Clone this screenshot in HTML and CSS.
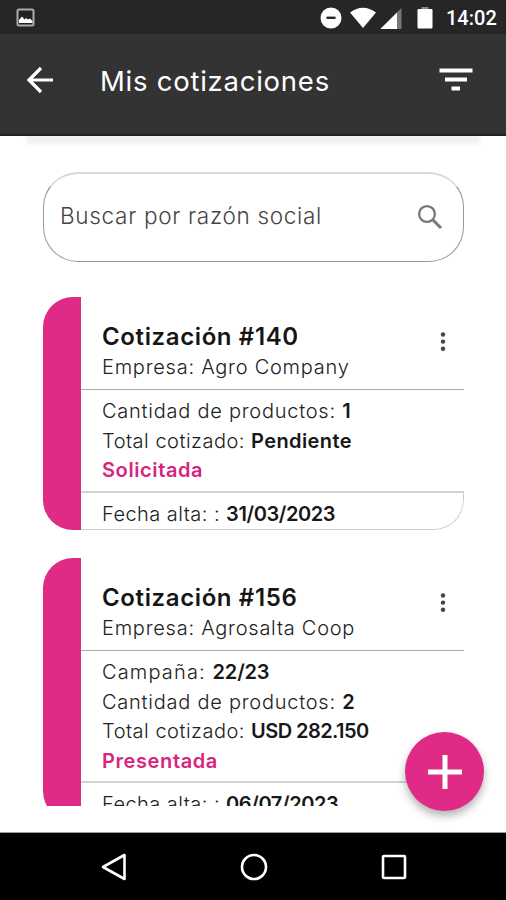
FILE: index.html
```html
<!DOCTYPE html>
<html lang="es">
<head>
<meta charset="utf-8">
<title>Mis cotizaciones</title>
<link rel="stylesheet" href="styles.css">
</head>
<body>
<div class="screen">
  <div class="statusbar">
    <svg class="status-picture" width="20" height="20" viewBox="0 0 20 20"><rect x="1.5" y="1.5" width="16" height="16" rx="1.5" fill="#222" stroke="#aaa" stroke-width="2"/><path d="M3 15v-3l3-3.500 2.500 3 1.500-1.500 2 1.500 2-1 2.500 2.500v2z" fill="#fff"/></svg>
    <svg class="signals" width="98" height="24" viewBox="0 0 98 24"><circle cx="11" cy="12" r="10.500" fill="#fff"/><path d="M6.500 11.800h9" stroke="#262626" stroke-width="2.400"/><path d="M30 6.500Q43 -3 56 6.500L43 22z" fill="#fff"/><path d="M81.500 2v21H60z" fill="#777"/><path d="M77 6.500V23H60.500z" fill="#fff"/></svg>
    <svg class="battery" width="16" height="22" viewBox="0 0 16 22"><path d="M4.500 0h7v3h-7z" fill="#888"/><rect x="0.500" y="2" width="15" height="19.500" rx="1" fill="#fff"/></svg>
    <span class="clock">14:02</span>
  </div>
  <header class="appbar">
    <svg width="30" height="28" viewBox="0 0 30 28"><path d="M28 14H4M16 2L4 14l12 12" fill="none" stroke="#fff" stroke-width="3.200"/></svg>
    <h1>Mis cotizaciones</h1>
    <svg class="filter" width="34" height="24" viewBox="0 0 34 24"><path d="M0.500 2.500h33M6 11.500h22M12.500 20.500h8.500" stroke="#fff" stroke-width="4"/></svg>
  </header>
  <main>
    <div class="search">
      <span>Buscar por razón social</span>
      <svg width="26" height="26" viewBox="0 0 26 26"><circle cx="10" cy="10" r="7.900" fill="none" stroke="#777" stroke-width="2.300"/><path d="M16 16l8 8" stroke="#777" stroke-width="3"/></svg>
    </div>
    <div class="list">
      <article class="card">
        <div class="accent"></div>
        <div class="content">
          <div class="head">
            <div><h2>Cotización #140</h2><p>Empresa: Agro Company</p></div>
            <svg class="more" width="6" height="20" viewBox="0 0 6 20"><g fill="#444"><circle cx="3" cy="2.500" r="2.200"/><circle cx="3" cy="9.600" r="2.200"/><circle cx="3" cy="16.800" r="2.200"/></g></svg>
          </div>
          <div class="details">
            <p>Cantidad de productos: <b>1</b></p>
            <p class="total">Total cotizado: <b>Pendiente</b></p>
            <p class="state">Solicitada</p>
          </div>
          <div class="foot"><p>Fecha alta: : <b>31/03/2023</b></p></div>
        </div>
      </article>
      <article class="card">
        <div class="accent"></div>
        <div class="content">
          <div class="head">
            <div><h2>Cotización #156</h2><p>Empresa: Agrosalta Coop</p></div>
            <svg class="more" width="6" height="20" viewBox="0 0 6 20"><g fill="#444"><circle cx="3" cy="2.500" r="2.200"/><circle cx="3" cy="9.600" r="2.200"/><circle cx="3" cy="16.800" r="2.200"/></g></svg>
          </div>
          <div class="details">
            <p class="campaign">Campaña: <b>22/23</b></p>
            <p>Cantidad de productos: <b>2</b></p>
            <p class="total">Total cotizado: <b class="amount">USD 282.150</b></p>
            <p class="state">Presentada</p>
          </div>
          <div class="foot"><p>Fecha alta: : <b>06/07/2023</b></p></div>
        </div>
      </article>
    </div>
    <div class="fab"><svg width="34" height="34" viewBox="0 0 34 34"><path d="M0 17h34M17 0v34" stroke="#fff" stroke-width="5"/></svg></div>
  </main>
  <nav class="navbar">
    <svg width="26" height="28" viewBox="0 0 26 28"><path d="M23.500 2v24L2 14z" fill="none" stroke="#fff" stroke-width="2.600" stroke-linejoin="round"/></svg>
    <svg width="28" height="28" viewBox="0 0 28 28"><circle cx="14" cy="14" r="12" fill="none" stroke="#fff" stroke-width="2.600"/></svg>
    <svg width="26" height="26" viewBox="0 0 26 26"><rect x="2" y="2" width="22" height="22" rx="1" fill="none" stroke="#fff" stroke-width="2.600"/></svg>
  </nav>
</div>
</body>
</html>
```
FILE: styles.css
```css
* { box-sizing: border-box; }
body { margin: 0; background: #fff; font-family: Inter, "Liberation Sans", sans-serif; }
h1, h2, p { margin: 0; }
svg { display: block; flex: none; }
.screen { width: 506px; height: 900px; display: flex; flex-direction: column; overflow: hidden; }

.statusbar { height: 34px; flex: none; background: #262626; display: flex; align-items: center; padding: 1px 10px 0 16px; }
.status-picture { margin-right: auto; }
.signals { margin-right: 0; }
.battery { margin: 0 13px 0 -1px; }
.clock { font: 500 20px/34px Roboto, sans-serif; color: #fff; width: 50px; white-space: nowrap; }

.appbar { height: 102px; flex: none; background: #333; border-bottom: 2px solid #222; display: flex; align-items: center; padding: 0 33px 8px 25px; box-shadow: 0 34px 4px -26px rgba(0,0,0,.06); }
.appbar h1 { margin: 2px 0 0 45px; font-size: 27.500px; line-height: 36px; font-weight: 400; color: #fff; letter-spacing: 0.750px; white-space: nowrap; }
.filter { margin-left: auto; }

main { position: relative; height: 697px; flex: none; padding: 36px 42px 0 43px; border-bottom: 1px solid #999; }
.search { height: 90px; border: 1px solid #999; border-top: 2px solid #d8d8d8; border-radius: 35px; display: flex; justify-content: space-between; align-items: center; padding: 0 20px 2px 16px; }
.search span { font-size: 22.500px; line-height: 30px; margin-top: -2px; font-weight: 300; color: #444; letter-spacing: 0.700px; white-space: nowrap; }

.list { margin-top: 35px; height: 508.500px; overflow: hidden; }
.card { display: flex; border-radius: 30px; overflow: hidden; margin-bottom: 28px; }
.accent { width: 38px; background: #df2b85; flex: none; }
.content { flex: 1; }
.head { height: 93px; padding: 24px 18px 0 21px; display: flex; justify-content: space-between; border-bottom: 1px solid #aaa; }
.head h2 { font-size: 24px; line-height: 32px; font-weight: 600; color: #161616; letter-spacing: 0.620px; white-space: nowrap; }
.more { margin-top: 11px; }
.card p { font-size: 20px; line-height: 29.500px; font-weight: 300; color: #222; white-space: nowrap; letter-spacing: 0.750px; }
.card .total { letter-spacing: 0.500px; }
.card .campaign { letter-spacing: 1.150px; }
.card b { font-weight: 600; color: #181818; letter-spacing: -0.200px; }
.card .total b { letter-spacing: 0.400px; }
.card .total .amount { letter-spacing: -0.560px; }
.details { padding: 7px 21px 5px; border-bottom: 2px solid #d2d2d2; }
.card .state { font-weight: 600; color: #d9247f; letter-spacing: 0.600px; }
.foot { height: 37.500px; padding: 7px 21px 0; border: 1px solid #ccc; border-width: 0 1px 1px 0; border-bottom-right-radius: 30px; }
.card .foot p { letter-spacing: 0.450px; }
.card .foot b { letter-spacing: -0.400px; }

.fab { position: absolute; left: 405px; top: 596px; width: 79px; height: 79px; border-radius: 50%; background: #df2b85; display: flex; align-items: center; justify-content: center; box-shadow: 0 5px 8px rgba(0,0,0,.3); }

.navbar { height: 67px; flex: none; background: #000; display: flex; justify-content: space-between; align-items: center; padding: 0 99px 0 101px; }
```
